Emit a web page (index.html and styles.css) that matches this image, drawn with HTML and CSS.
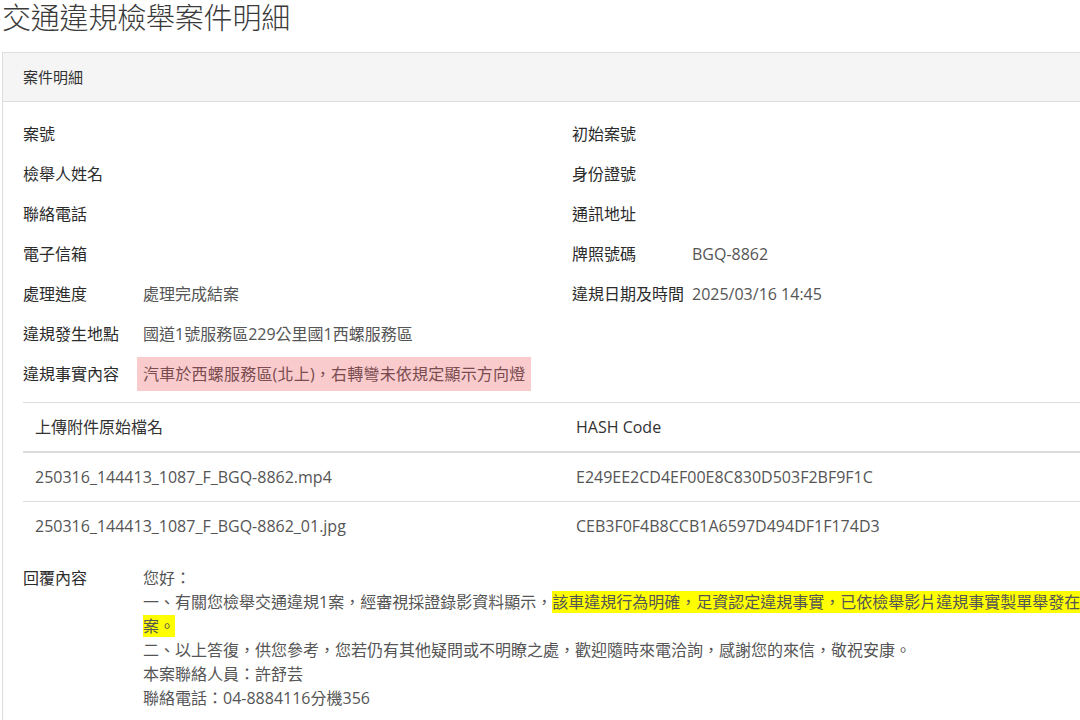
FILE: index.html
```html
<!DOCTYPE html>
<html lang="zh-Hant">
<head>
<meta charset="utf-8">
<title>交通違規檢舉案件明細</title>
<link rel="stylesheet" href="styles.css">
</head>
<body>
<div class="page">
  <h1 class="title">交通違規檢舉案件明細</h1>
  <div class="panel">
    <div class="panel-heading">案件明細</div>
    <div class="panel-body">
      <div class="info-grid">
        <div class="field"><span class="label">案號</span><span class="value"></span></div>
        <div class="field"><span class="label">初始案號</span><span class="value"></span></div>
        <div class="field"><span class="label">檢舉人姓名</span><span class="value"></span></div>
        <div class="field"><span class="label">身份證號</span><span class="value"></span></div>
        <div class="field"><span class="label">聯絡電話</span><span class="value"></span></div>
        <div class="field"><span class="label">通訊地址</span><span class="value"></span></div>
        <div class="field"><span class="label">電子信箱</span><span class="value"></span></div>
        <div class="field"><span class="label">牌照號碼</span><span class="value">BGQ-8862</span></div>
        <div class="field"><span class="label">處理進度</span><span class="value">處理完成結案</span></div>
        <div class="field"><span class="label">違規日期及時間</span><span class="value">2025/03/16 14:45</span></div>
        <div class="field wide"><span class="label">違規發生地點</span><span class="value">國道1號服務區229公里國1西螺服務區</span></div>
        <div class="field wide"><span class="label">違規事實內容</span><span class="value fact">汽車於西螺服務區(北上)，右轉彎未依規定顯示方向燈</span></div>
      </div>

      <table class="files">
        <colgroup><col class="half"><col class="half"></colgroup>
        <thead>
          <tr><th>上傳附件原始檔名</th><th>HASH Code</th></tr>
        </thead>
        <tbody>
          <tr><td>250316_144413_1087_F_BGQ-8862.mp4</td><td>E249EE2CD4EF00E8C830D503F2BF9F1C</td></tr>
          <tr><td>250316_144413_1087_F_BGQ-8862_01.jpg</td><td>CEB3F0F4B8CCB1A6597D494DF1F174D3</td></tr>
        </tbody>
      </table>

      <div class="reply">
        <span class="label">回覆內容</span>
        <div class="reply-text">您好：<br>一、有關您檢舉交通違規1案，經審視採證錄影資料顯示，<span class="mark">該車違規行為明確，足資認定違規事實，已依檢舉影片違規事實製單舉發在案。</span><br>二、以上答復，供您參考，您若仍有其他疑問或不明瞭之處，歡迎隨時來電洽詢，感謝您的來信，敬祝安康。<br>本案聯絡人員：許舒芸<br>聯絡電話：04-8884116分機356</div>
      </div>
    </div>
  </div>
</div>
</body>
</html>
```

FILE: styles.css
```css
html, body {
  margin: 0;
  padding: 0;
  background: #ffffff;
  overflow: hidden;
}

body {
  font-family: "Open Sans", "Noto Sans CJK TC", sans-serif;
  font-size: 16px;
  color: #333333;
}

.page {
  padding: 0 2px;
  width: 1140px;
}

.title {
  margin: 0 0 16px 0;
  font-size: 29px;
  line-height: 36px;
  font-weight: 300;
  color: #3a3a3a;
  letter-spacing: -0.2px;
}

.panel {
  border: 1px solid #dddddd;
  width: 1138px;
}

.panel-heading {
  background: #f5f5f5;
  border-bottom: 1px solid #dddddd;
  height: 48px;
  line-height: 48px;
  padding: 0 20px;
  font-size: 15px;
  color: #333333;
}

.panel-body {
  padding: 12px 20px 20px 20px;
}

.info-grid {
  display: grid;
  grid-template-columns: 549px 549px;
  grid-auto-rows: 40px;
}

.field {
  display: flex;
  align-items: center;
}

.field.wide {
  grid-column: 1 / 3;
}

.label {
  width: 114px;
  flex: none;
  color: #2b2b2b;
  line-height: 24px;
  white-space: nowrap;
}

.value {
  padding: 0 6px;
  color: #555555;
  line-height: 24px;
}

.value.fact {
  background: #f9cbcd;
  color: #7a4c4f;
  padding: 5px 6px;
  letter-spacing: 0.2px;
}

.files {
  margin-top: 8px;
  border-collapse: collapse;
  width: 1082px;
  table-layout: fixed;
}

.files col.half {
  width: 541px;
}

.files th,
.files td {
  padding: 12px;
  line-height: 24px;
  text-align: left;
  vertical-align: top;
}

.files th {
  border-top: 1px solid #dddddd;
  border-bottom: 2px solid #dddddd;
  font-weight: normal;
  color: #333333;
}

.files td {
  border-top: 1px solid #dddddd;
  color: #555555;
}

.files tbody tr:first-child td {
  border-top: none;
}

.reply {
  display: flex;
  margin-top: 16px;
}

.reply .label {
  line-height: 24px;
}

.reply-text {
  width: 945px;
  padding-left: 6px;
  line-height: 24px;
  color: #555555;
}

.mark {
  background: #ffff00;
}
```
